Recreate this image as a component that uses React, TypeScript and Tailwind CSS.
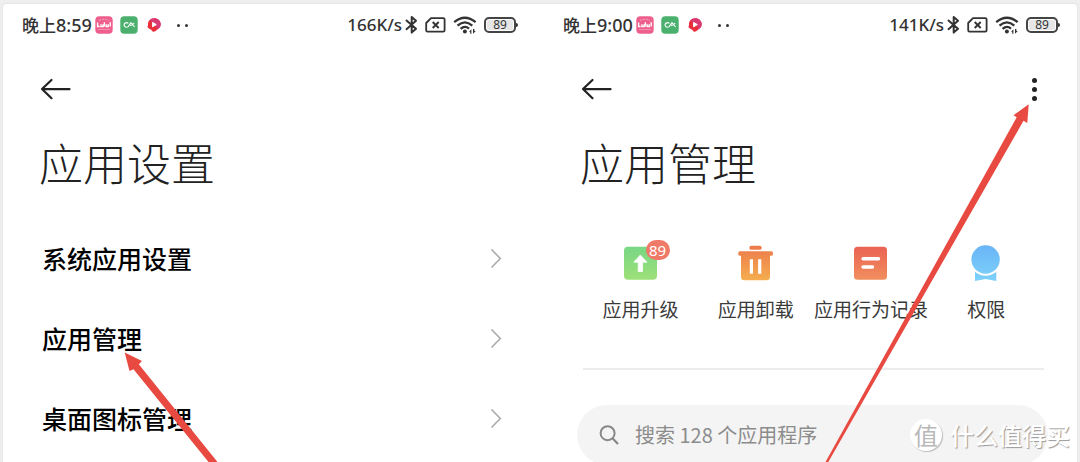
import React from "react";

const titleFont = "font-['Noto_Sans_CJK_SC_Light','Noto_Sans_CJK_SC',sans-serif] font-light";

function PinkAppIcon() {
  return (
    <svg className="size-[18px]" viewBox="0 0 18 18" aria-hidden="true">
      <rect x="0.300" y="0.300" width="17.400" height="17.400" rx="4" fill="#ee5f8d" />
      <path d="M4 4.500 Q9 2 14 4.500" stroke="#f7a6c0" strokeWidth="1" fill="none" strokeDasharray="2 1" />
      <path
        d="M2.600 6.500v4h2M6 8.300v2.300h2.100V8.300M9.400 6.300v4.300M11.200 8.300v2.300h2V8.300M15.200 6.300v4.300"
        stroke="#fff"
        strokeWidth="1.400"
        fill="none"
      />
      <path d="M3 13.500h12" stroke="#f48fb0" strokeWidth="1" />
    </svg>
  );
}

function GreenAppIcon() {
  return (
    <svg className="size-[18px]" viewBox="0 0 18 18" aria-hidden="true">
      <rect x="0.300" y="0.300" width="17.400" height="17.400" rx="4" fill="#4bb06d" />
      <path
        d="M8.400 7.400A2.500 2.200 0 1 0 8.200 10.600L11 6.600l3.600 4.400M10.200 9.600c1.600-.4 3-1.200 4-2.600"
        stroke="#fff"
        strokeWidth="1.100"
        fill="none"
      />
    </svg>
  );
}

function RedAppIcon() {
  return (
    <svg className="size-[14px]" viewBox="0 0 14 14" aria-hidden="true">
      <path d="M7.200.3C11 .3 13.700 3 13.700 6.200c0 2.600-1.500 4.300-3.400 5.200-1.200.7-2 2.300-3.800 2.300-1.500 0-1.500-1.200-2.300-1.900C3 10.900.7 10.600.5 8.800c-.1-1 .7-1.300.5-2.400C.6 3.400 3.400.3 7.200.3Z" fill="#e8303c" />
      <path d="M7.200.3C11 .3 13.700 3 13.700 6.200c0 2.600-1.500 4.300-3.400 5.200L9 7 2.400 2.400C3.500 1.200 5.100.3 7.200.3Z" fill="#d93a74" />
      <path d="M5.600 4.400v4.400L9.300 6.600Z" fill="#fff" stroke="#fff" strokeWidth="1" strokeLinejoin="round" />
    </svg>
  );
}

function BluetoothIcon() {
  return (
    <svg className="h-[20px] w-[13px]" viewBox="0 0 13 20" aria-hidden="true">
      <path d="M1.500 5.500 11 13.800 6.700 17.600V2L11 5.800 1.500 14.200" stroke="#333" strokeWidth="2" fill="none" strokeLinejoin="round" strokeLinecap="round" />
    </svg>
  );
}

function SimIcon() {
  return (
    <svg className="h-[16px] w-[21px]" viewBox="0 0 21 16" aria-hidden="true">
      <path d="M6 1.200H18.300Q19.600 1.200 19.600 2.500V13.300Q19.600 14.600 18.300 14.600H2.500Q1.200 14.600 1.200 13.300V6Z" stroke="#333" strokeWidth="1.800" fill="none" strokeLinejoin="round" />
      <path d="m7.700 5 6 6m0-6-6 6" stroke="#333" strokeWidth="1.900" />
    </svg>
  );
}

function WifiIcon() {
  return (
    <svg className="h-[18px] w-[24px]" viewBox="0 0 24 18" aria-hidden="true">
      <g stroke="#333" strokeWidth="2.300" fill="none">
        <path d="M1.200 6.200Q11.800-2.600 22.600 6.200" />
        <path d="M4.500 9.600Q11.900 3.200 19.300 9.600" />
        <path d="M7.600 12.800Q11.900 9 16 12.600" />
      </g>
      <circle cx="11.900" cy="15.600" r="2" fill="#333" />
      <path d="M18.400 17.800v-4.600l-2.400 2.600h1.200v2ZM20 13v4.800l2.800-2.800h-1.400v-2Z" fill="#333" />
    </svg>
  );
}

function Battery() {
  return (
    <span className="flex items-center">
      <span className="flex h-4 w-8 items-center justify-center rounded-[5px] border-2 border-[#444] bg-[#e6e6e6] font-['Noto_Sans',sans-serif] text-[12px] leading-none text-[#333] ring-1 ring-white ring-inset">
        89
      </span>
      <span className="h-1 w-[2px] rounded-r-sm bg-[#333]" />
    </span>
  );
}

function StatusBar({ time, speed }: { time: string; speed: string }) {
  return (
    <div className="flex h-[42px] items-center justify-between text-[#333]">
      <div className="flex items-center">
        <span className="w-[73px] text-[17px] font-medium whitespace-nowrap">
          晚上<span className="font-['Noto_Sans',sans-serif] text-[18px]">{time}</span>
        </span>
        <PinkAppIcon />
        <span className="ml-[7px] flex"><GreenAppIcon /></span>
        <span className="ml-[9px] flex"><RedAppIcon /></span>
        <span className="ml-[16px] flex gap-[5px]">
          <i className="size-[3px] rounded-full bg-[#333]" />
          <i className="size-[3px] rounded-full bg-[#333]" />
        </span>
      </div>
      <div className="flex items-center">
        <span className="font-['Noto_Sans',sans-serif] text-[17px] font-medium whitespace-nowrap">{speed}</span>
        <span className="ml-[3px] flex"><BluetoothIcon /></span>
        <span className="ml-[7px] flex"><SimIcon /></span>
        <span className="ml-[7px] flex"><WifiIcon /></span>
        <span className="ml-[7px] flex"><Battery /></span>
      </div>
    </div>
  );
}

function BackButton() {
  return (
    <button type="button" aria-label="返回" className="flex">
      <svg className="h-[22px] w-[31px]" viewBox="0 0 31 22" aria-hidden="true">
        <path d="M11.500 2 2 11 11.500 20.200M2.500 11.200H29.500" stroke="#222" strokeWidth="2.200" fill="none" strokeLinecap="round" strokeLinejoin="round" />
      </svg>
    </button>
  );
}

function SettingRow({ label }: { label: string }) {
  return (
    <li>
      <a href="#" className="flex h-20 items-center justify-between text-[25px] font-medium text-black">
        {label}
        <svg className="h-[20px] w-[12px]" viewBox="0 0 12 20" aria-hidden="true">
          <path d="m1.500 0.500 8.800 9-8.800 9" stroke="#aaa" strokeWidth="1.600" fill="none" />
        </svg>
      </a>
    </li>
  );
}

function UpgradeIcon() {
  return (
    <svg className="size-[36px]" viewBox="0 0 36 36" aria-hidden="true">
      <defs>
        <linearGradient id="up" x1="0" y1="0" x2="0" y2="1">
          <stop offset="0" stopColor="#78d784" />
          <stop offset="1" stopColor="#9de078" />
        </linearGradient>
      </defs>
      <rect x="1" y="1.700" width="33" height="33" rx="4" fill="url(#up)" />
      <path d="M17.300 10 23.900 17.200H19.500V26.500H15.200V17.200H10.800Z" fill="#fff" stroke="#fff" strokeWidth="0.800" strokeLinejoin="round" />
    </svg>
  );
}

function TrashIcon() {
  return (
    <svg className="size-[36px]" viewBox="0 0 36 36" aria-hidden="true">
      <defs>
        <linearGradient id="trash" gradientUnits="userSpaceOnUse" x1="0" y1="0" x2="0" y2="36">
          <stop offset="0" stopColor="#ec784b" />
          <stop offset="1" stopColor="#f5ae50" />
        </linearGradient>
      </defs>
      <g fill="url(#trash)">
        <rect x="11.500" y="0.800" width="12" height="4" rx="1.500" />
        <rect x="0.300" y="6.300" width="34.600" height="4.500" rx="1.500" />
        <path d="M3 9H32V31.800Q32 35.300 28.500 35.300H6.500Q3 35.300 3 31.800Z" />
      </g>
      <path d="M13.400 14.300V28.800M21.700 14.300V28.800" stroke="#fff" strokeWidth="3.200" />
    </svg>
  );
}

function RecordIcon() {
  return (
    <svg className="size-[36px]" viewBox="0 0 36 36" aria-hidden="true">
      <defs>
        <linearGradient id="record" x1="0" y1="0" x2="0" y2="1">
          <stop offset="0" stopColor="#ea6253" />
          <stop offset="1" stopColor="#f18f5e" />
        </linearGradient>
      </defs>
      <rect x="1" y="1.700" width="33" height="33" rx="3.500" fill="url(#record)" />
      <path d="M10.100 13.700H25.500M10.100 22H19.500" stroke="#fff" strokeWidth="3.400" strokeLinecap="round" />
    </svg>
  );
}

function PermissionIcon() {
  return (
    <svg className="size-[36px]" viewBox="0 0 36 36" aria-hidden="true">
      <defs>
        <linearGradient id="permission" gradientUnits="userSpaceOnUse" x1="0" y1="0" x2="0" y2="36">
          <stop offset="0" stopColor="#69b4f7" />
          <stop offset="1" stopColor="#7ed2fa" />
        </linearGradient>
      </defs>
      <path d="M7 27 H28.300V36L17.600 34 7 36Z" fill="url(#permission)" />
      <circle cx="17.600" cy="14.500" r="16.300" fill="#fff" />
      <circle cx="17.600" cy="14.500" r="14.200" fill="url(#permission)" />
    </svg>
  );
}

function Shortcut({ label, badge, children }: { label: string; badge?: string; children: React.ReactNode }) {
  return (
    <button type="button" className="flex flex-col items-center gap-[14px] text-[19px] leading-7 whitespace-nowrap text-[#3a3a3a]">
      <span className="relative flex">
        {children}
        {badge && (
          <span className="absolute -top-[5px] -right-[11px] flex h-5 w-6 items-center justify-center rounded-full bg-[#ef7a68] font-['Noto_Sans',sans-serif] text-[15px] leading-none text-white">
            {badge}
          </span>
        )}
      </span>
      {label}
    </button>
  );
}

function Watermark() {
  return (
    <div className="absolute right-[10px] bottom-[9px] flex items-center gap-2 text-white">
      <span className="flex size-8 items-center justify-center rounded-full bg-white text-[24px] leading-none text-[#b8b8b8] shadow-[1px_1px_1px_#bbb]">
        值
      </span>
      <span className="text-[24px] leading-9 font-medium [text-shadow:1px_1px_1px_#999]">什么值得买</span>
    </div>
  );
}

export default function App() {
  return (
    <div className="relative h-screen overflow-hidden bg-[#efefef] px-[3px] pt-1 font-['Noto_Sans_CJK_SC',sans-serif]">
      <div className="grid min-h-full grid-cols-[541fr_533fr] rounded-t-sm bg-white shadow-[0_0_3px_#ddd]">
        <section className="pr-[26px] pl-[19px]">
          <StatusBar time="8:59" speed="166K/s" />
          <div className="flex h-[86px] items-center pl-[18px]">
            <BackButton />
          </div>
          <h1 className={`${titleFont} pl-[17px] text-[44px] leading-[60px] text-[#222]`}>应用设置</h1>
          <ul className="mt-[27px] pr-4 pl-5">
            <SettingRow label="系统应用设置" />
            <SettingRow label="应用管理" />
            <SettingRow label="桌面图标管理" />
          </ul>
        </section>

        <section className="pr-[17px] pl-[19px]">
          <StatusBar time="9:00" speed="141K/s" />
          <div className="flex h-[86px] items-center justify-between pr-[23px] pl-[18px]">
            <BackButton />
            <button type="button" aria-label="更多" className="flex flex-col gap-1">
              <i className="size-[5px] rounded-full bg-[#222]" />
              <i className="size-[5px] rounded-full bg-[#222]" />
              <i className="size-[5px] rounded-full bg-[#222]" />
            </button>
          </div>
          <h1 className={`${titleFont} pl-[17px] text-[44px] leading-[60px] text-[#222]`}>应用管理</h1>
          <div className="mt-[53px] mr-4 ml-5 grid grid-cols-4 border-b-2 border-[#ececec] pb-[45px]">
            <Shortcut label="应用升级" badge="89"><UpgradeIcon /></Shortcut>
            <Shortcut label="应用卸载"><TrashIcon /></Shortcut>
            <Shortcut label="应用行为记录"><RecordIcon /></Shortcut>
            <Shortcut label="权限"><PermissionIcon /></Shortcut>
          </div>
          <label className="mt-[35px] mr-3 ml-[14px] flex h-[60px] items-center gap-4 rounded-full bg-[#f4f4f4] pl-[22px]">
            <svg className="size-[20px] shrink-0" viewBox="0 0 20 20" aria-hidden="true">
              <circle cx="8.600" cy="8.200" r="7" stroke="#888" strokeWidth="2" fill="none" />
              <path d="m13.500 13.300 5.500 5.700" stroke="#888" strokeWidth="2.300" />
            </svg>
            <input
              type="text"
              aria-label="搜索"
              placeholder="搜索 128 个应用程序"
              className="min-w-0 grow bg-transparent text-[20px] outline-none placeholder:text-[#8c8c8c]"
            />
          </label>
        </section>
      </div>

      <Watermark />
      <svg className="pointer-events-none absolute top-0 left-0 h-[462px] w-[1080px]" viewBox="0 0 1080 462" aria-hidden="true">
        <path d="M124.700 352.500 142 361 138.800 364.300 217.500 462H208.500L133.500 369.300 129.500 371Z" fill="#e84a41" />
        <path d="M1028.700 104.300 1027.300 123 1023.500 120.800 828.300 462H825.500L1016.700 117.300 1013.500 115.300Z" fill="#e84a41" />
      </svg>
    </div>
  );
}
